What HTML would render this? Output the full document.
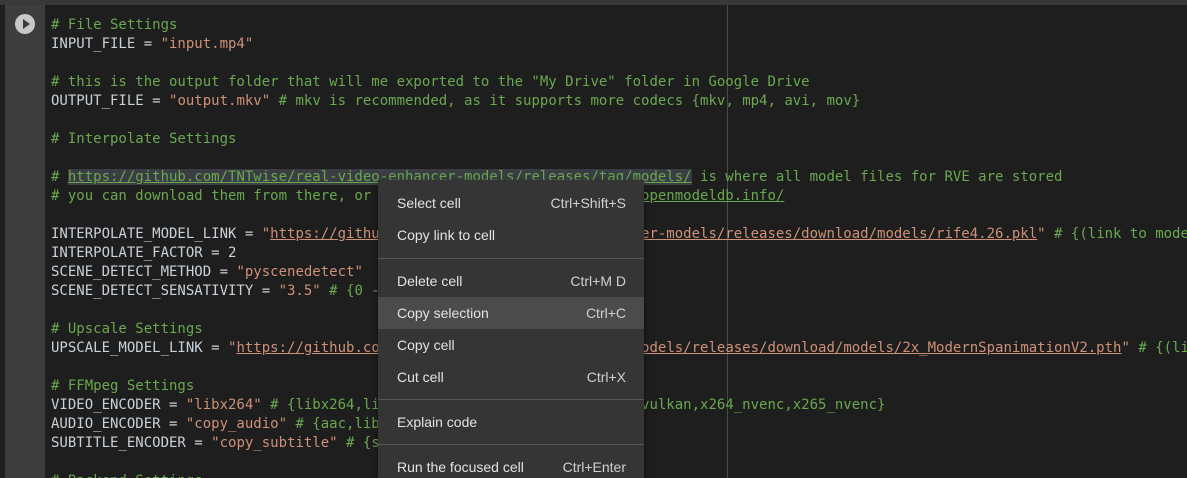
<!DOCTYPE html>
<html style="overflow:hidden;width:1187px;height:478px"><head><style>
body{margin:0;width:1187px;height:478px;overflow:hidden;background:#1e1e1e;position:relative;font-family:"DejaVu Sans Mono","Liberation Mono",monospace}
#top{position:absolute;left:0;top:0;width:1187px;height:5px;background:#383838}
#gut{position:absolute;left:5px;top:5px;width:40px;height:473px;background:#3d3d3d}
#play{position:absolute;left:15px;top:14px;width:20px;height:20px;border-radius:50%;background:#c8c8c8}
#play:after{content:"";position:absolute;left:8px;top:5px;border-left:7px solid #3d3d3d;border-top:5px solid transparent;border-bottom:5px solid transparent}
#ruler{position:absolute;left:727px;top:5px;width:1px;height:473px;background:#4a4a4a}
#wrap{position:absolute;left:0;top:0;width:1187px;height:478px;overflow:hidden}
pre{position:absolute;left:51px;top:16px;margin:0;font-size:14px;line-height:19px;color:#c9d1d9;white-space:pre}
.c{color:#6aa84f}.s{color:#ce9178}
.u{text-decoration:underline}
.sel{background:#3a3e44}
#menu{position:absolute;left:378px;top:180px;width:266px;height:298px;overflow:hidden;background:#353535;font-family:"Liberation Sans",sans-serif;font-size:14px;color:#e3e3e3;box-shadow:0 2px 6px rgba(0,0,0,.5)}
.it{position:absolute;left:0;width:266px;height:32px;line-height:32px}
.it span{position:absolute;left:19px}.it b{position:absolute;right:18px;font-weight:normal;color:#d0d0d0}
.hl{background:#4b4b4b}
.sp{position:absolute;left:0;width:266px;height:1px;background:#555}
</style></head><body>
<div id="wrap">
<div id="top"></div><div id="gut"></div><div id="play"></div><div id="ruler"></div>
<pre><span class="c"># File Settings</span>
INPUT_FILE = <span class="s">"input.mp4"</span>

<span class="c"># this is the output folder that will me exported to the "My Drive" folder in Google Drive</span>
OUTPUT_FILE = <span class="s">"output.mkv"</span> <span class="c"># mkv is recommended, as it supports more codecs {mkv, mp4, avi, mov}</span>

<span class="c"># Interpolate Settings</span>

<span class="c"># <span class="u sel">https://github.com/TNTwise/real-video-enhancer-models/releases/tag/models/</span> is where all model files for RVE are stored</span>
<span class="c"># you can download them from there, or any upscale model from <span class="u">https://openmodeldb.info/</span></span>

INTERPOLATE_MODEL_LINK = <span class="s">"<span class="u">https://github.com/TNTwise/real-video-enhancer-models/releases/download/models/rife4.26.pkl</span>"</span> <span class="c"># {(link to model)}</span>
INTERPOLATE_FACTOR = 2
SCENE_DETECT_METHOD = <span class="s">"pyscenedetect"</span>
SCENE_DETECT_SENSATIVITY = <span class="s">"3.5"</span> <span class="c"># {0 - 10}</span>

<span class="c"># Upscale Settings</span>
UPSCALE_MODEL_LINK = <span class="s">"<span class="u">https://github.com/TNTwise/real-video-enhancer-models/releases/download/models/2x_ModernSpanimationV2.pth</span>"</span> <span class="c"># {(link to model)}</span>

<span class="c"># FFMpeg Settings</span>
VIDEO_ENCODER = <span class="s">"libx264"</span> <span class="c"># {libx264,libx265,vp9,av1,prores,ffv1,x264_vulkan,x264_nvenc,x265_nvenc}</span>
AUDIO_ENCODER = <span class="s">"copy_audio"</span> <span class="c"># {aac,libmp3lame,opus,flac,copy_audio}</span>
SUBTITLE_ENCODER = <span class="s">"copy_subtitle"</span> <span class="c"># {srt,ass,copy_subtitle}</span>

<span class="c"># Backend Settings</span></pre>
<div id="menu">
<div class="it" style="top:7px"><span>Select cell</span><b>Ctrl+Shift+S</b></div>
<div class="it" style="top:39px"><span>Copy link to cell</span></div>
<div class="sp" style="top:78px"></div>
<div class="it" style="top:85px"><span>Delete cell</span><b>Ctrl+M D</b></div>
<div class="it hl" style="top:117px"><span>Copy selection</span><b>Ctrl+C</b></div>
<div class="it" style="top:149px"><span>Copy cell</span></div>
<div class="it" style="top:181px"><span>Cut cell</span><b>Ctrl+X</b></div>
<div class="sp" style="top:219px"></div>
<div class="it" style="top:226px"><span>Explain code</span></div>
<div class="sp" style="top:264px"></div>
<div class="it" style="top:271px"><span>Run the focused cell</span><b>Ctrl+Enter</b></div>
</div>
</div>
</body></html>
